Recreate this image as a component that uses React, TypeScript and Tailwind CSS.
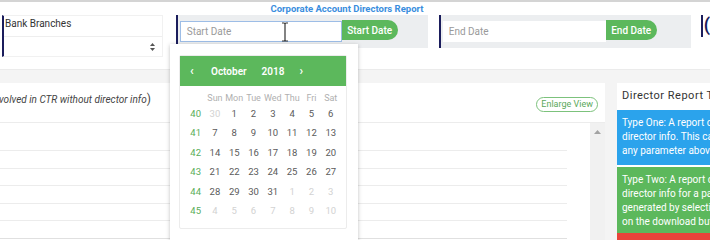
import React from 'react';

const navy = 'border-[#1b1d5c]';

const weeks = [
  { n: 40, days: [[30, true], [1], [2], [3], [4], [5], [6]] },
  { n: 41, days: [[7], [8], [9], [10], [11], [12], [13]] },
  { n: 42, days: [[14], [15], [16], [17], [18], [19], [20]] },
  { n: 43, days: [[21], [22], [23], [24], [25], [26], [27]] },
  { n: 44, days: [[28], [29], [30], [31], [1, true], [2, true], [3, true]] },
  { n: 45, days: [[4, true], [5, true], [6, true], [7, true], [8, true], [9, true], [10, true]] },
];

const dayNames = ['Sun', 'Mon', 'Tue', 'Wed', 'Thu', 'Fri', 'Sat'];

const Calendar: React.FC = () => (
  <div className="absolute left-[170px] top-[42px] w-[188px] h-[196px] bg-white shadow-[0_1px_4px_rgba(0,0,0,0.25)] pt-[11px] pl-[9px]">
    <div className="w-[168px] h-[174px] border border-[#ececec] rounded-[2px]">
      <div className="h-[30px] bg-[#5cb85c] flex items-center text-white text-[10px] font-semibold pl-[10px]">
        <span className="w-[6px] text-[12px] leading-none">‹</span>
        <span className="ml-[15px]">October</span>
        <span className="ml-[15px]">2018</span>
        <span className="ml-[15px] text-[12px] leading-none">›</span>
      </div>
      <div className="pl-[6px] pt-[6px]">
        <div className="grid grid-cols-[repeat(8,19.3px)] h-[12px] text-[9px] leading-[12px] text-[#b0b0b0] text-center">
          <span />
          {dayNames.map((d) => (
            <span key={d}>{d}</span>
          ))}
        </div>
        {weeks.map((w) => (
          <div key={w.n} className="grid grid-cols-[repeat(8,19.3px)] h-[19.5px] items-center text-[9.5px] text-center">
            <span className="text-[#5aad5a]">{w.n}</span>
            {w.days.map((d, i) => (
              <span key={i} className={d[1] ? 'text-[#d2d2d2]' : 'text-[#5a5a5a]'}>
                {d[0] as number}
              </span>
            ))}
          </div>
        ))}
      </div>
    </div>
  </div>
);

const DateGroup: React.FC<{ label: string; inputW: string; btnW: string; focused?: boolean }> = ({ label, inputW, btnW, focused }) => (
  <div className={`h-[33px] w-[252px] border-l-2 ${navy} bg-[#eceef0] flex items-start pt-[6px] pl-[2px]`}>
    <div
      className={`${inputW} h-[21px] bg-white flex items-center pl-[6px] text-[10px] text-[#9a9a9a] ${
        focused ? 'border border-[#9dbde6]' : ''
      }`}
    >
      {label}
    </div>
    <div className={`${btnW} h-[20px] -mt-[1px] bg-[#5cb85c] rounded-r-full rounded-l-[4px] text-white text-[10px] font-medium flex items-center justify-center`}>
      {label}
    </div>
  </div>
);

const App: React.FC = () => {
  return (
    <div className="w-[710px] h-[240px] overflow-hidden bg-white relative font-['Roboto',sans-serif] border-t-2 border-[#d4d4d4]">
      <div className="h-[13px] text-center pr-[16px] text-[9.5px] leading-[13px] font-bold text-[#3a8ede]">
        Corporate Account Directors Report
      </div>

      <div className="flex items-start h-[42px] mb-[12px]">
        <div className={`ml-[2px] w-[163px] h-[42px] border-l-2 ${navy} bg-white border-y border-r border-y-[#f1f1f1] border-r-[#f1f1f1] flex flex-col`}>
          <div className="h-[20px] pl-[1px] pt-[2px] text-[10px] leading-[12px] text-[#333]">Bank Branches</div>
          <div className="flex-1 border-t border-[#eeeeee] flex items-center justify-end pr-[7px]">
            <svg width="5" height="8" viewBox="0 0 5 8">
              <path d="M2.5 0 L5 3 H0 Z" fill="#555" />
              <path d="M2.5 8 L5 5 H0 Z" fill="#555" />
            </svg>
          </div>
        </div>
        <div className="ml-[13px]">
          <DateGroup label="Start Date" inputW="w-[162px]" btnW="w-[56px]" focused />
        </div>
        <div className="ml-[11px]">
          <DateGroup label="End Date" inputW="w-[163px]" btnW="w-[51px]" />
        </div>
        <div className={`ml-[10px] h-[22px] border-l-2 ${navy} pl-[1px] text-[#1b1d5c] text-[18px] leading-[20px] font-bold`}>
          (
        </div>
      </div>

      <div className="bg-[#f4f4f4] border-t border-[#ebebeb] pt-[13px] flex h-[171px]">
        <div className="w-[605px] h-full bg-white flex flex-col">
          <div className="h-[40px] border-b border-[#ececec] flex items-start justify-between pt-[9px] pr-[7px]">
            <div className="text-[10px] text-[#444] leading-[14px] -ml-[1px]">
              <span className="italic">volved in CTR without director info</span>
              <span className="text-[12px]">)</span>
            </div>
            <div className="mt-[5px] h-[15px] px-[4px] rounded-full border border-[#7cc27c] text-[#5aa85a] text-[9px] leading-[13px]">
              Enlarge View
            </div>
          </div>
          <div className="flex flex-1">
            <div className="w-[567px]">
              <div className="h-[28px] border-b border-[#ececec]" />
              <div className="h-[17.5px] border-b border-[#ececec]" />
              <div className="h-[17.5px] border-b border-[#ececec]" />
              <div className="h-[17.5px] border-b border-[#ececec]" />
              <div className="h-[17.5px] border-b border-[#ececec]" />
              <div className="h-[17.5px] border-b border-[#e0e0e0]" />
            </div>
            <div className="ml-[23px] w-[15px] bg-[#f1f1f1] flex justify-center pt-[7px]">
              <svg width="7" height="4" viewBox="0 0 7 4">
                <path d="M3.5 0 L7 4 H0 Z" fill="#a3a3a3" />
              </svg>
            </div>
          </div>
        </div>

        <div className="ml-[12px] flex-1 h-full bg-white flex flex-col overflow-hidden">
          <div className="h-[27px] pl-[5px] flex items-center text-[11px] text-[#333] whitespace-nowrap tracking-[0.5px]">
            Director Report Types
          </div>
          <div className="h-[55px] bg-[#2ba3ec] text-white text-[10px] leading-[14px] pl-[5px] pt-[6px] whitespace-nowrap">
            <div>Type One: A report of all accounts without</div>
            <div>director info. This can be generated with</div>
            <div>any parameter above.</div>
          </div>
          <div className="h-[66px] mt-[2px] bg-[#5cb85c] text-white text-[10px] leading-[14px] pl-[5px] pt-[6px] whitespace-nowrap">
            <div>Type Two: A report of accounts without</div>
            <div>director info for a particular date. It is</div>
            <div>generated by selecting the date and clicking</div>
            <div>on the download button.</div>
          </div>
          <div className="flex-1 bg-[#e8443a]" />
        </div>
      </div>

      <Calendar />

      <svg className="absolute left-[281px] top-[20px]" width="8" height="20" viewBox="0 0 8 20">
        <path d="M1 1 H3 Q4 1 4 2 V18 Q4 19 3 19 H1 M7 1 H5 Q4 1 4 2 M4 18 Q4 19 5 19 H7" stroke="#333" strokeWidth="1.2" fill="none" />
      </svg>
    </div>
  );
};

export default App;
